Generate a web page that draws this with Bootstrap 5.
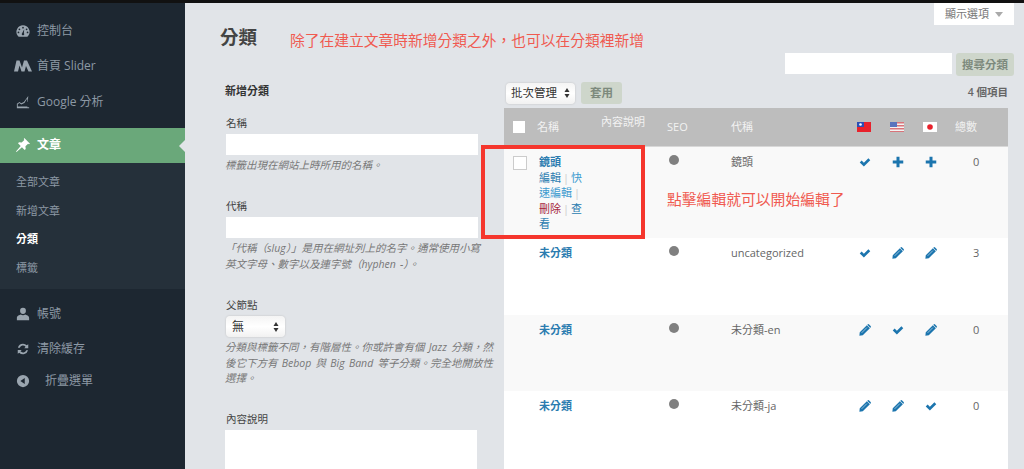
<!DOCTYPE html>
<html lang="zh-Hant"><head><meta charset="utf-8"><title>分類</title>
<link href="https://cdn.jsdelivr.net/npm/bootstrap@5.3.0/dist/css/bootstrap.min.css" rel="stylesheet">
<style>
html,body{height:469px;overflow:hidden}
body{font-family:"Open Sans","Noto Sans CJK TC",sans-serif;font-size:11px;background:#e1e4e8;color:#555;border-top:3px solid #111;position:relative}
.wrap-all{height:466px;overflow:hidden}
.side{width:185px;flex:none;background:#1d2731;color:#8d99a5;height:466px;padding-top:10px}
.side-item{height:35.500px;padding-left:16px;gap:7px;font-size:12px}
.side-item svg{width:14px;height:14px;flex:none;fill:#9aa5af}
.side-item.wide svg{width:18px;margin-left:-2px;margin-right:-2px}
.side-on{background:#6aa87a;color:#fff;height:35px;margin-top:8px;position:relative;font-weight:600}
.side-on svg{fill:#fff}
.side-on::after{content:"";position:absolute;right:0;top:12px;border:6px solid transparent;border-right-color:#e1e4e8;border-left:0}
.side-sub{background:#25303a;height:126px;padding:6px 0 0 16px;font-size:11px;color:#8d99a5}
.side-sub div{height:28.400px;display:flex;align-items:center}
.side-sub .now{color:#fff;font-weight:700}
.side-low{margin-top:8px}
.side-low .side-item:nth-child(2){height:34.500px}
.side-low .side-item:nth-child(3){height:28px}
.main-area{flex:1;min-width:0;padding:0 16px 0 40px;position:relative}
.opt-btn{width:80px;height:22px;background:#fff;color:#777;margin-left:auto;margin-right:-6px;font-size:11px;gap:6px}
.opt-tri{border:4px solid transparent;border-top:5px solid #aaa;border-bottom:0}
.page-title{font-size:18.500px;font-weight:600;color:#444;margin:0 0 0 -5px;line-height:24px;height:28px}
.srch{height:23px;gap:4px;margin-right:-6px}
.srch-in{width:167px;height:21px;background:#fff}
.flat-btn{background:#ced6cb;color:#7d8a7d;border-radius:3px;height:22px;font-size:11.500px;padding:0 9px;display:flex;align-items:center;font-weight:600}
.srch .flat-btn{height:23px;width:58px;justify-content:center;padding:0;white-space:nowrap}
.cols{gap:26px;margin-top:6px}
.form-col{width:253px;flex:none}
.form-head{font-size:11px;font-weight:700;color:#333;line-height:16px;margin:0 0 17px;padding-top:1px}
.fld-label{font-size:10.500px;color:#444;line-height:14px;margin:0 0 4px 1px;display:block}
.fld-in{background:#fff;height:21px;width:252px;margin-left:1px;display:block}
.fld-in.fld-tall{height:60px;margin-left:0}
.fld-help{font-style:italic;color:#777;font-size:10.500px;line-height:15.400px;margin:3px -16px 0 0;white-space:nowrap;word-spacing:1.500px}
.fld{margin-bottom:26px}
.sel-box{width:59px;height:21px;background:linear-gradient(#f4f4f4,#fff,#f1f1f1);border-radius:4px;box-shadow:0 0 2px #bbb;font-size:12px;color:#333;padding:0 6px;margin-left:1px;justify-content:space-between}
.updown{display:inline-block;width:6px}
.list-col{flex:1;min-width:0}
.bulk-row{height:26px;gap:6px;padding-bottom:4px;align-items:center}
.sel-bulk{width:69px;height:21px;font-size:11.500px;padding:0 5px;margin-left:2px}
.count-txt{margin-left:auto;font-size:10.500px;color:#666;font-weight:600}
.grid-tbl{table-layout:fixed;width:504px;margin:0;--bs-table-bg:transparent;border-collapse:collapse}
.grid-tbl th,.grid-tbl td{border:0;padding:0;vertical-align:top;font-size:11px;box-shadow:none}
.grid-tbl thead tr{background:#bdbdbd;height:38px}
.grid-tbl th{color:#f2f2f2;font-weight:400;font-size:11px;vertical-align:middle;border-bottom:1px solid #d8d8d8}
.ck{display:block;width:12px;height:12px;background:#fff;margin-left:9px}
.ck-line{border:1px solid #ccc;margin-top:2px;width:14px;height:14px}
.r1{height:92px;background:#f9f9f9}.r2{height:77px;background:#fff}.r3{height:76px;background:#f9f9f9}.r4{height:78px;background:#fff}
.grid-tbl td{padding-top:7px;color:#666}
.grid-tbl a{text-decoration:none;color:#2b7cb0}
.nm{font-weight:700;font-size:11px;line-height:15px;padding-left:2px}
.acts{line-height:15.500px;margin-top:1px;width:52px;font-size:11px;padding-left:2px;box-sizing:content-box}
.acts i{font-style:normal;color:#ccc;margin:0 2px}
.acts .del{color:#a5263a}.acts .lt{color:#3d9bd0}
.dot{display:block;width:10px;height:10px;border-radius:50%;background:#808080;margin:1px 0 0 2px}
.cell-ico{width:12px;height:12px;display:block;fill:#1c75ae;margin:2px 0 0 9px}
.hd-ico{width:14px;height:10px;display:block;margin-left:7px}
.num{color:#3e8dc0;padding-left:24px!important}
.tot-h{padding-left:6px!important}
.desc-h{position:relative;top:-5px;display:block}
.note-a,.note-b{position:absolute;color:#f05a50;line-height:20px}
.note-a{left:290px;top:27px;font-size:14.750px}
.note-b{left:667px;top:186px;font-size:14.800px}
.red-frame{position:absolute;left:481px;top:142px;width:164px;height:94px;border:4px solid #f5362d}
</style></head>
<body>
<div class="d-flex wrap-all">
<nav class="side">
<div class="d-flex align-items-center side-item"><svg viewBox="0 0 16 16"><path fill-rule="evenodd" d="M8 1.500a7.500 7.500 0 0 0-6 12l1 1h10l1-1a7.500 7.500 0 0 0-6-12ZM8 3.200a1 1 0 1 1 0 2 1 1 0 0 1 0-2ZM3.900 5a1 1 0 1 1 0 2 1 1 0 0 1 0-2Zm8.200 0a1 1 0 1 1 0 2 1 1 0 0 1 0-2ZM2.800 8.600a1 1 0 1 1 0 2 1 1 0 0 1 0-2Zm10.400 0a1 1 0 1 1 0 2 1 1 0 0 1 0-2ZM9.400 6 9 10.500a1.400 1.400 0 1 1-2 0Z"/></svg><span>控制台</span></div>
<div class="d-flex align-items-center side-item wide"><svg viewBox="0 0 18 14"><path d="M0 12.500 2.500 1.500h3L8 8.500 10 1.500h3L18 12.500h-3.500L12 7l-1.500 5.500H7.500L5.500 6.500 4 12.500Z"/></svg><span>首頁 Slider</span></div>
<div class="d-flex align-items-center side-item"><svg viewBox="0 0 16 16"><path d="M1 14h14v1H1Zm0-1V10l3-2 2 1.500 3-1.500 5-7-.6 7H13l-.2-4L9.600 9 6 10.800 4 9.200 2 10.500V13h11v1H1Z"/></svg><span>Google 分析</span></div>
<div class="d-flex align-items-center side-item side-on"><svg viewBox="0 0 16 16"><path d="M9.500 0 16 6.500l-1.200.6-1-.6-3 3 .3 3-1.200 1.200L6.800 10.600 .6 16 0 15.400l5.400-6.200L2.300 6.100 3.500 4.900l3 .3 3-3-.6-1Z"/></svg><span>文章</span></div>
<div class="side-sub"><div>全部文章</div><div>新增文章</div><div class="now">分類</div><div>標籤</div></div>
<div class="side-low">
<div class="d-flex align-items-center side-item"><svg viewBox="0 0 16 16"><path d="M8 1a3.300 3.300 0 0 1 3.300 3.500c0 1.800-1 3.500-3.300 3.500S4.700 6.300 4.700 4.500A3.300 3.300 0 0 1 8 1ZM1 15v-2.500C1 10 4 9.500 5.500 8.700 6.500 9.500 9.500 9.500 10.500 8.700 12 9.500 15 10 15 12.500V15Z"/></svg><span>帳號</span></div>
<div class="d-flex align-items-center side-item"><svg viewBox="0 0 16 16"><path d="M8 2a6 6 0 0 1 4.300 1.800L14 2.500V7H9.500l1.400-1.700A4 4 0 0 0 4.300 6.500H2.200A6 6 0 0 1 8 2ZM2 9h4.500L5.100 10.700a4 4 0 0 0 6.600-1.200h2.100A6 6 0 0 1 3.700 12.200L2 13.500Z"/></svg><span>清除緩存</span></div>
<div class="d-flex align-items-center side-item"><svg viewBox="0 0 16 16"><path fill-rule="evenodd" d="M8 1a7 7 0 1 1 0 14A7 7 0 0 1 8 1Zm2 3.500L5 8l5 3.500Z"/></svg><span class="ms-2">折疊選單</span></div>
</div>
</nav>
<main class="main-area">
<div class="d-flex align-items-center justify-content-center opt-btn"><span>顯示選項</span><span class="opt-tri"></span></div>
<h1 class="page-title">分類</h1>
<div class="d-flex justify-content-end align-items-start srch"><span class="srch-in"></span><span class="flat-btn">搜尋分類</span></div>
<div class="d-flex cols">
<section class="form-col">
<h2 class="form-head">新增分類</h2>
<div class="fld"><label class="fld-label">名稱</label><span class="fld-in"></span><p class="fld-help">標籤出現在網站上時所用的名稱。</p></div>
<div class="fld"><label class="fld-label">代稱</label><span class="fld-in"></span><p class="fld-help">「代稱（slug）」是用在網址列上的名字。通常使用小寫<br>英文字母、數字以及連字號（hyphen -）。</p></div>
<div class="fld"><label class="fld-label">父節點</label><div class="d-flex align-items-center sel-box"><span>無</span><svg class="updown" viewBox="0 0 6 12"><path d="M3 1l2.500 4h-5ZM3 11 .5 7h5Z" fill="#333"/></svg></div><p class="fld-help">分類與標籤不同，有階層性。你或許會有個 Jazz 分類，然<br>後它下方有 Bebop 與 Big Band 等子分類。完全地開放性<br>選擇。</p></div>
<div class="fld"><label class="fld-label">內容說明</label><span class="fld-in fld-tall"></span></div>
</section>
<section class="list-col">
<div class="d-flex bulk-row"><div class="d-flex align-items-center sel-box sel-bulk"><span>批次管理</span><svg class="updown" viewBox="0 0 6 12"><path d="M3 1l2.500 4h-5ZM3 11 .5 7h5Z" fill="#333"/></svg></div><span class="flat-btn">套用</span><span class="count-txt">4 個項目</span></div>
<table class="table grid-tbl">
<colgroup><col style="width:33px"><col style="width:64px"><col style="width:66px"><col style="width:64px"><col style="width:119px"><col style="width:33px"><col style="width:33px"><col style="width:33px"><col></colgroup>
<thead><tr><th><span class="ck"></span></th><th>名稱</th><th><span class="desc-h">內容說明</span></th><th>SEO</th><th>代稱</th>
<th><svg class="hd-ico" viewBox="0 0 14 10"><rect width="14" height="10" fill="#e8212b"/><rect width="7" height="5" fill="#2b4fb5"/><circle cx="3.500" cy="2.500" r="1.300" fill="#fff"/></svg></th>
<th><svg class="hd-ico" viewBox="0 0 14 10"><rect width="14" height="10" fill="#f3f3f3"/><path d="M0 0h14v1.500H0Zm0 3h14v1.500H0Zm0 3h14v1.500H0Zm0 3h14v1H0Z" fill="#d9747a"/><rect width="7" height="5" fill="#5a74bd"/></svg></th>
<th><svg class="hd-ico" viewBox="0 0 14 10"><rect width="14" height="10" fill="#fff"/><circle cx="7" cy="5" r="2.800" fill="#e8212b"/></svg></th>
<th class="tot-h">總數</th></tr></thead>
<tbody>
<tr class="r1"><td><span class="ck ck-line"></span></td><td><div class="nm"><a href="#">鏡頭</a></div><div class="acts"><a href="#">編輯</a><i>|</i><a class="lt" href="#">快速編輯</a><i>|</i><a class="del" href="#">刪除</a><i>|</i><a href="#">查看</a></div></td><td></td><td><span class="dot"></span></td><td>鏡頭</td>
<td><svg class="cell-ico" viewBox="0 0 16 16"><use href="#ic-ck"/></svg></td><td><svg class="cell-ico" viewBox="0 0 16 16"><use href="#ic-pl"/></svg></td><td><svg class="cell-ico" viewBox="0 0 16 16"><use href="#ic-pl"/></svg></td><td class="num">0</td></tr>
<tr class="r2"><td></td><td><div class="nm"><a href="#">未分類</a></div></td><td></td><td><span class="dot"></span></td><td>uncategorized</td>
<td><svg class="cell-ico" viewBox="0 0 16 16"><use href="#ic-ck"/></svg></td><td><svg class="cell-ico" viewBox="0 0 16 16"><use href="#ic-pe"/></svg></td><td><svg class="cell-ico" viewBox="0 0 16 16"><use href="#ic-pe"/></svg></td><td class="num">3</td></tr>
<tr class="r3"><td></td><td><div class="nm"><a href="#">未分類</a></div></td><td></td><td><span class="dot"></span></td><td>未分類-en</td>
<td><svg class="cell-ico" viewBox="0 0 16 16"><use href="#ic-pe"/></svg></td><td><svg class="cell-ico" viewBox="0 0 16 16"><use href="#ic-ck"/></svg></td><td><svg class="cell-ico" viewBox="0 0 16 16"><use href="#ic-pe"/></svg></td><td class="num">0</td></tr>
<tr class="r4"><td></td><td><div class="nm"><a href="#">未分類</a></div></td><td></td><td><span class="dot"></span></td><td>未分類-ja</td>
<td><svg class="cell-ico" viewBox="0 0 16 16"><use href="#ic-pe"/></svg></td><td><svg class="cell-ico" viewBox="0 0 16 16"><use href="#ic-pe"/></svg></td><td><svg class="cell-ico" viewBox="0 0 16 16"><use href="#ic-ck"/></svg></td><td class="num">0</td></tr>
</tbody></table>
</section>
</div>
</main>
</div>
<div class="note-a">除了在建立文章時新增分類之外，也可以在分類裡新增</div>
<div class="note-b">點擊編輯就可以開始編輯了</div>
<div class="red-frame"></div>
<svg width="0" height="0" class="position-absolute"><defs>
<symbol id="ic-ck" viewBox="0 0 16 16"><path d="M1 8.500 3.500 6 6.500 9 12.500 3 15 5.500 6.500 14Z"/></symbol>
<symbol id="ic-pl" viewBox="0 0 16 16"><path d="M6 1h4v5h5v4h-5v5H6v-5H1V6h5Z"/></symbol>
<symbol id="ic-pe" viewBox="0 0 16 16"><path d="M10.500 1.500 14.500 5.500 5 15 0.500 15.500 1 11ZM11.500.5a1.500 1.500 0 0 1 2 0l2 2a1.500 1.500 0 0 1 0 2l-.5.500-4-4Z"/><path d="M3.500 11.800 10.500 4.800" stroke="#cfe2ef" stroke-width=".9" fill="none"/></symbol>
</defs></svg>
</body></html>
